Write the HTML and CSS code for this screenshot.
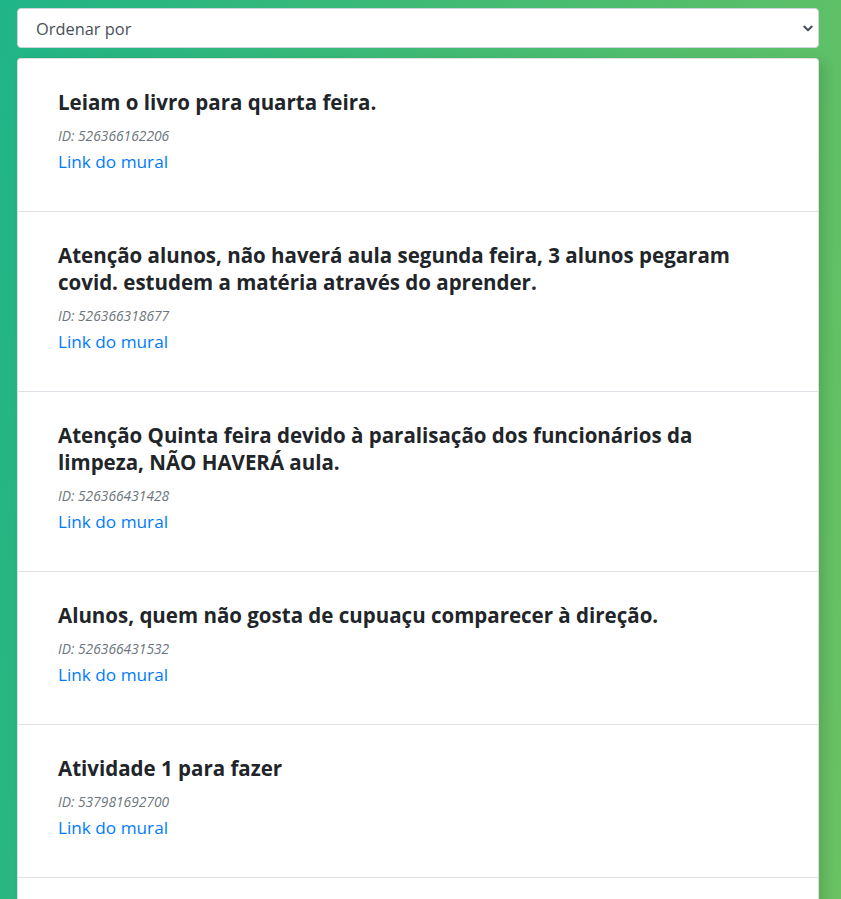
FILE: index.html
```html
<!DOCTYPE html>
<html lang="pt-BR">
<head>
<meta charset="utf-8">
<title>Mural</title>
<link rel="stylesheet" href="styles.css">
</head>
<body>
<main class="page">
  <div class="sort-wrap">
    <select class="sort">
      <option>Ordenar por</option>
    </select>
    <svg class="chevron" width="10" height="7" viewBox="0 0 10 7" aria-hidden="true">
      <path d="M1.3 1.5 L5 5.2 L8.7 1.5" fill="none" stroke="#495057" stroke-width="2" stroke-linecap="round" stroke-linejoin="round"/>
    </svg>
  </div>
  <section class="card">
    <article class="item">
      <h4 class="title">Leiam o livro para quarta feira.</h4>
      <p class="id">ID: 526366162206</p>
      <a class="link" href="#">Link do mural</a>
    </article>
    <article class="item">
      <h4 class="title">Atenção alunos, não haverá aula segunda feira, 3 alunos pegaram covid. estudem a matéria através do aprender.</h4>
      <p class="id">ID: 526366318677</p>
      <a class="link" href="#">Link do mural</a>
    </article>
    <article class="item">
      <h4 class="title">Atenção Quinta feira devido à paralisação dos funcionários da limpeza, NÃO HAVERÁ aula.</h4>
      <p class="id">ID: 526366431428</p>
      <a class="link" href="#">Link do mural</a>
    </article>
    <article class="item">
      <h4 class="title">Alunos, quem não gosta de cupuaçu comparecer à direção.</h4>
      <p class="id">ID: 526366431532</p>
      <a class="link" href="#">Link do mural</a>
    </article>
    <article class="item">
      <h4 class="title">Atividade 1 para fazer</h4>
      <p class="id">ID: 537981692700</p>
      <a class="link" href="#">Link do mural</a>
    </article>
  </section>
</main>
</body>
</html>
```
FILE: styles.css
```css
html, body {
  margin: 0;
  padding: 0;
}
body {
  font-family: "Open Sans", "Noto Sans", "Liberation Sans", sans-serif;
  background: linear-gradient(100deg, #1fb487 0%, #45bb72 50%, #6ac262 100%);
  background-attachment: fixed;
  height: 899px;
  overflow: hidden;
  color: #212529;
}
.page {
  width: 802px;
  margin: 0 22px 0 17px;
  padding-top: 8px;
}
.sort-wrap {
  position: relative;
  height: 40px;
}
.sort {
  appearance: none;
  -webkit-appearance: none;
  width: 100%;
  height: 40px;
  box-sizing: border-box;
  border: 1px solid #ced4da;
  border-radius: 4px;
  background: #fff;
  padding: 0 18px;
  font-family: inherit;
  font-size: 16.4px;
  color: #495057;
  outline: none;
}
.chevron {
  position: absolute;
  right: 6px;
  top: 17px;
  pointer-events: none;
}
.card {
  margin-top: 10px;
  padding-bottom: 60px;
  background: #fff;
  border: 1px solid rgba(0, 0, 0, 0.125);
  border-radius: 4px;
  box-shadow: 6px 4px 12px rgba(0, 0, 0, 0.12);
}
.item {
  padding: 30px 40px 36px;
  border-bottom: 1px solid #dee2e6;
  display: flex;
  flex-direction: column;
  align-items: flex-start;
}
.title {
  margin: 0 0 9px;
  font-size: 20.5px;
  line-height: 27px;
  font-weight: 700;
  color: #212529;
}
.id {
  margin: 0;
  font-size: 13.8px;
  line-height: 21px;
  font-style: italic;
  color: #6c757d;
}
.link {
  margin-top: 2px;
  font-size: 17.2px;
  line-height: 27px;
  color: #007bff;
  text-decoration: none;
}
```
